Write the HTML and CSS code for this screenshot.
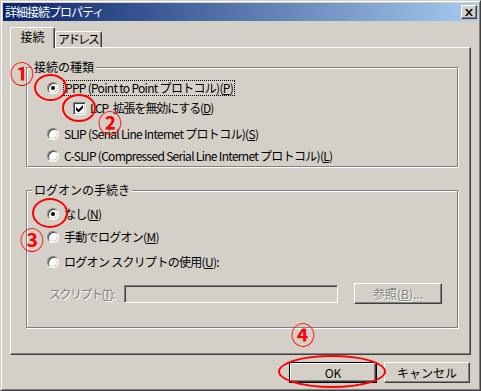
FILE: index.html
```html
<!DOCTYPE html>
<html lang="ja">
<head>
    <meta charset="UTF-8">
    <title>詳細接続プロパティ</title>
    <link rel="stylesheet" href="styles.css">
</head>
<body>
    <div class="window">
        <div class="titlebar">
            <span class="title">詳細接続プロパティ</span>
            <span class="close">
                <svg width="8" height="7" viewBox="0 0 8 7">
                    <path d="M0 0h2l2 2.5L6 0h2L5 3.5 8 7H6L4 4.5 2 7H0l3-3.5z" fill="#000"/>
                </svg>
            </span>
        </div>

        <div class="content">
            <div class="tabs">
                <div class="tab active">接続</div>
                <div class="tab">アドレス</div>
            </div>

            <div class="panel">
                <!-- 接続の種類 -->
                <fieldset class="group group-type">
                    <legend>接続の種類</legend>
                    <div class="option">
                        <span class="radio checked"></span>
                        <span class="text focus">PPP (Point to Point プロトコル)(<u>P</u>)</span>
                    </div>
                    <div class="option sub">
                        <span class="checkbox">
                            <svg width="7" height="7" viewBox="0 0 7 7">
                                <path d="M0 2v3l2 2h1l4-4V0L2.5 4.5z" fill="#000"/>
                            </svg>
                        </span>
                        <span class="text">LCP 拡張を無効にする(<u>D</u>)</span>
                    </div>
                    <div class="option slip">
                        <span class="radio"></span>
                        <span class="text">SLIP (Serial Line Internet プロトコル)(<u>S</u>)</span>
                    </div>
                    <div class="option cslip">
                        <span class="radio"></span>
                        <span class="text">C-SLIP (Compressed Serial Line Internet プロトコル)(<u>L</u>)</span>
                    </div>
                </fieldset>

                <!-- ログオンの手続き -->
                <fieldset class="group group-logon">
                    <legend>ログオンの手続き</legend>
                    <div class="option">
                        <span class="radio checked"></span>
                        <span class="text">なし(<u>N</u>)</span>
                    </div>
                    <div class="option manual">
                        <span class="radio"></span>
                        <span class="text">手動でログオン(<u>M</u>)</span>
                    </div>
                    <div class="option use-script">
                        <span class="radio"></span>
                        <span class="text">ログオン スクリプトの使用(<u>U</u>):</span>
                    </div>
                    <div class="script-row">
                        <span class="script-label disabled">スクリプト(<u>T</u>):</span>
                        <span class="field"></span>
                        <button class="btn browse disabled">参照(<u>B</u>)...</button>
                    </div>
                </fieldset>
            </div>

            <div class="actions">
                <button class="btn default">OK</button>
                <button class="btn">キャンセル</button>
            </div>
        </div>
    </div>

    <!-- 注釈 -->
    <div class="notes">
        <span class="num n1">①</span>
        <span class="ring r1"></span>
        <span class="ring r2"></span>
        <span class="num n2">②</span>
        <span class="num n3">③</span>
        <span class="ring r3"></span>
        <span class="num n4">④</span>
        <span class="ring r4"></span>
    </div>
</body>
</html>
```

FILE: styles.css
```css
* {
    box-sizing: border-box;
}

body {
    margin: 0;
    font-family: "Noto Sans CJK JP", "Liberation Sans", sans-serif;
    font-size: 12px;
    color: #000;
    background: #d4d0c8;
}

.window {
    position: relative;
    width: 481px;
    height: 391px;
    padding: 2px;
    background: #d4d0c8;
    border: 1px solid;
    border-color: #d4d0c8 #404040 #404040 #d4d0c8;
    box-shadow: inset 1px 1px #fff, inset -1px -1px #808080;
}

/* タイトルバー */
.titlebar {
    height: 18px;
    display: flex;
    align-items: center;
    justify-content: space-between;
    padding: 0 1px 0 2px;
    background: linear-gradient(90deg, #0a246a 0%, #a6caf0 100%);
    color: #fff;
}

.title {
    font-size: 12px;
    line-height: 14px;
    letter-spacing: -1px;
}

.close {
    width: 16px;
    height: 14px;
    display: flex;
    align-items: center;
    justify-content: center;
    background: #d4d0c8;
    border: 1px solid;
    border-color: #fff #404040 #404040 #fff;
    box-shadow: inset -1px -1px #808080;
}

.content {
    padding: 6px 7px 0 7px;
}

/* タブ */
.tabs {
    display: flex;
    align-items: flex-end;
    height: 20px;
}

.tab {
    height: 16px;
    padding: 0 2px;
    line-height: 14px;
    white-space: nowrap;
    border: 1px solid;
    border-bottom: none;
    border-color: #fff #404040 #404040 #fff;
    border-radius: 2px 2px 0 0;
    box-shadow: inset -1px 0 #808080;
    background: #d4d0c8;
}

.tab.active {
    position: relative;
    z-index: 1;
    width: 45px;
    height: 21px;
    margin-bottom: -1px;
    text-align: center;
    line-height: 17px;
}

.tab:not(.active) {
    width: 47px;
    letter-spacing: -2px;
}

.panel {
    height: 308px;
    padding: 12px 12px 0 15px;
    border: 1px solid;
    border-color: #fff #404040 #404040 #fff;
    box-shadow: inset -1px -1px #808080;
}

/* グループ */
.group {
    margin: 0;
    padding: 0 0 0 20px;
    border: 1px solid #808080;
    box-shadow: inset 1px 1px #fff, 1px 1px #fff;
}

.group legend {
    margin-left: -15px;
    padding: 0 2px;
    line-height: 14px;
    background: #d4d0c8;
}

.group-type {
    height: 107px;
}

.group-logon {
    height: 145px;
    margin-top: 16px;
}

.option {
    display: flex;
    align-items: center;
    height: 16px;
    gap: 5px;
    white-space: nowrap;
}

.group .option:first-of-type {
    margin-top: 6px;
}

.option.sub {
    margin-top: 4px;
    padding-left: 26px;
    gap: 4px;
}

.option.slip {
    margin-top: 10px;
}

.option.cslip {
    margin-top: 6px;
}

.group-logon .option:first-of-type {
    margin-top: 9px;
}

.option.manual {
    margin-top: 7px;
}

.option.use-script {
    margin-top: 9px;
}

.text {
    line-height: 14px;
    letter-spacing: -0.7px;
}

.option.sub .text {
    letter-spacing: -1.1px;
    word-spacing: 3px;
}

.text.focus {
    outline: 1px dotted #000;
    outline-offset: 0;
    padding: 0 1px;
}

/* ラジオボタン・チェックボックス */
.radio {
    position: relative;
    flex: none;
    width: 12px;
    height: 12px;
    border-radius: 50%;
    background: #fff;
    border: 1px solid;
    border-color: #808080 #fff #fff #808080;
    box-shadow: inset 1px 1px #404040, inset -1px -1px #d4d0c8;
}

.radio.checked::after {
    content: '';
    position: absolute;
    left: 3px;
    top: 3px;
    width: 4px;
    height: 4px;
    border-radius: 50%;
    background: #000;
}

.checkbox {
    flex: none;
    width: 13px;
    height: 13px;
    display: flex;
    align-items: center;
    justify-content: center;
    background: #fff;
    border: 1px solid;
    border-color: #808080 #fff #fff #808080;
    box-shadow: inset 1px 1px #404040, inset -1px -1px #d4d0c8;
}

/* スクリプト行 */
.script-row {
    display: flex;
    align-items: center;
    height: 21px;
    margin-top: 13px;
}

.script-label {
    width: 75px;
    margin-left: 2px;
    white-space: nowrap;
    letter-spacing: -1.5px;
}

.disabled {
    color: #808080;
    text-shadow: 1px 1px #fff;
}

.field {
    width: 214px;
    height: 18px;
    background: #d4d0c8;
    border: 1px solid;
    border-color: #808080 #fff #fff #808080;
    box-shadow: inset 1px 1px #404040, inset -1px -1px #d4d0c8;
}

/* ボタン */
.btn {
    width: 86px;
    height: 21px;
    padding: 0;
    font-family: inherit;
    font-size: 12px;
    color: #000;
    background: #d4d0c8;
    border: 1px solid;
    border-color: #fff #404040 #404040 #fff;
    box-shadow: inset -1px -1px #808080;
}

.btn.browse {
    width: 88px;
    margin-left: 16px;
    color: #808080;
}

.btn.default {
    width: 88px;
    border-color: #000;
    box-shadow: inset 1px 1px #fff, inset -1px -1px #404040, inset -2px -2px #808080;
}

.actions {
    display: flex;
    justify-content: flex-end;
    gap: 7px;
    margin-top: 7px;
    padding-right: 1px;
}

/* 注釈 */
.notes {
    position: absolute;
    left: 0;
    top: 0;
}

.num {
    position: absolute;
    font-size: 24px;
    line-height: 24px;
    font-weight: bold;
    color: #f00;
}

.ring {
    position: absolute;
    border: 2px solid #f00;
    border-radius: 50%;
}

.n1 { left: 10px; top: 61px; }
.n2 { left: 98px; top: 110px; }
.n3 { left: 20px; top: 227px; }
.n4 { left: 291px; top: 322px; }

.r1 { left: 34px; top: 74px; width: 33px; height: 27px; }
.r2 { left: 62px; top: 94px; width: 34px; height: 28px; }
.r3 { left: 32px; top: 198px; width: 36px; height: 30px; }
.r4 { left: 278px; top: 355px; width: 108px; height: 33px; }
```
